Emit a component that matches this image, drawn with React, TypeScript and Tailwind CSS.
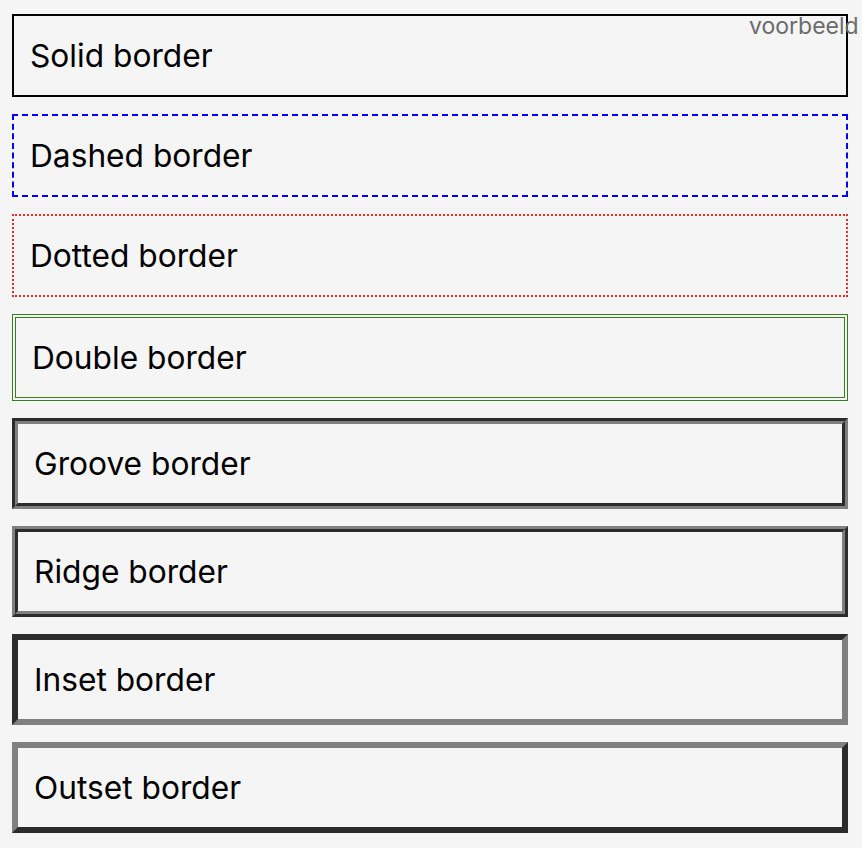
import React from "react";

const font = { fontFamily: "Inter, 'Noto Sans', sans-serif" };

export default function App() {
  return (
    <div
      className="relative w-[862px] h-[848px] overflow-hidden bg-[#f5f5f5] text-black"
      style={font}
    >
      <div className="absolute left-[749px] top-[12px] whitespace-nowrap text-[23px] leading-[28px] text-[#6b6b6b]">
        voorbeeld
      </div>
      <div className="flex flex-col gap-[17px] pt-[14px] pl-[12px]">
        <div className="w-[836px] border-2 border-solid border-black px-[16px] py-[16px] text-[31.7px] leading-[47px]">
          Solid border
        </div>
        <div className="w-[836px] border-2 border-dashed border-[#0000ff] px-[16px] py-[16px] text-[31.7px] leading-[47px]">
          Dashed border
        </div>
        <div className="w-[836px] border-2 border-dotted border-[#ee2a24] px-[16px] py-[16px] text-[31.7px] leading-[47px]">
          Dotted border
        </div>
        <div className="w-[836px] border-4 border-double border-[#3b7d23] px-[16px] py-[16px] text-[31.7px] leading-[47px]">
          Double border
        </div>
        <div className="w-[836px] border-[6px] [border-style:groove] border-[#808080] px-[16px] py-[16px] text-[31.7px] leading-[47px]">
          Groove border
        </div>
        <div className="w-[836px] border-[6px] [border-style:ridge] border-[#808080] px-[16px] py-[16px] text-[31.7px] leading-[47px]">
          Ridge border
        </div>
        <div className="w-[836px] border-[6px] [border-style:inset] border-[#808080] px-[16px] py-[16px] text-[31.7px] leading-[47px]">
          Inset border
        </div>
        <div className="w-[836px] border-[6px] [border-style:outset] border-[#808080] px-[16px] py-[16px] text-[31.7px] leading-[47px]">
          Outset border
        </div>
      </div>
    </div>
  );
}
